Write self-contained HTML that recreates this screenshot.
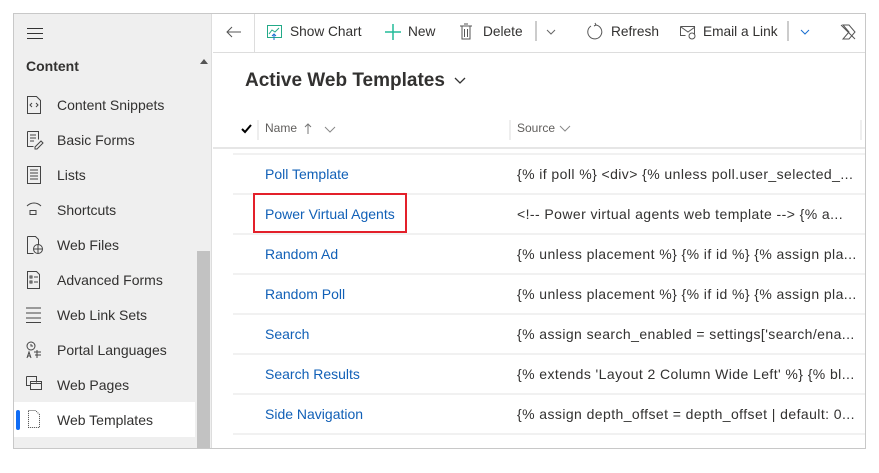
<!DOCTYPE html><html><head><style>
*{margin:0;padding:0;box-sizing:border-box}
body{width:879px;height:462px;background:#fff;font-family:"Liberation Sans",sans-serif;position:relative;overflow:hidden}
.frame{position:absolute;left:13px;top:13px;width:853px;height:436px;border:1px solid #c8c8c8;}
.side{position:absolute;left:14px;top:14px;width:198px;height:434px;background:#efefef;border-right:1px solid #ddd}
.track{position:absolute;left:183px;top:237px;width:13px;height:197px;background:#c2c2c2}
.it{position:absolute;left:57px;font-size:14px;color:#323130;line-height:16px}
.main{position:absolute;left:213px;top:14px;width:652px;height:434px}
.tb{position:absolute;left:0;top:0;width:652px;height:39px;border-bottom:1px solid #ddd}
.tt{position:absolute;top:10px;font-size:13.7px;color:#323130}
.row{position:absolute;left:20px;width:632px;height:40px;border-top:2px solid #f1f1f1}
.n{position:absolute;left:32px;top:11px;font-size:14px;color:#1160b7}
.s{position:absolute;left:284px;top:11px;font-size:14px;color:#323130;white-space:nowrap;letter-spacing:0.42px}
</style></head><body>
<div class="frame"></div>
<div class="side">
<div style="position:absolute;left:13px;top:14px;width:16px;height:11px;border-top:1px solid #333;border-bottom:1px solid #333"><div style="margin-top:4px;border-top:1px solid #333"></div></div>
<div style="position:absolute;left:12px;top:44px;font-size:14px;font-weight:bold;color:#323130">Content</div>
<div style="position:absolute;left:186px;top:45px;width:0;height:0;border-left:4px solid transparent;border-right:4px solid transparent;border-bottom:5px solid #555"></div>
<div class="track"></div>
<div style="position:absolute;left:0;top:388px;width:181px;height:35px;background:#fff"></div>
<div style="position:absolute;left:2px;top:396px;width:4px;height:20px;background:#0f6cf5;border-radius:2px"></div>
</div>
<svg style="position:absolute;left:0;top:0" width="60" height="440" fill="none" stroke="#444" stroke-width="1">
<path d="M27.5 96.5h9l4 4v13h-13z M32 103l-2 2 2 2 M36 103l2 2-2 2"/>
<path d="M27.5 131.5h11v8 M27.5 131.5v15h6 M30 135h6 M30 138h6 M30 141h4 M35 147l6-6 2 2-6 6h-2z"/>
<path d="M27.5 166.5h13v17h-13z M30 170h8 M30 173h8 M30 176h8 M30 179h8"/>
<path d="M27 206c4-4 10-4 14 0 M30 210.5h6v4h-6z"/>
<path d="M27.5 236.5h8l3 3v5 M27.5 236.5v17h6"/><circle cx="38" cy="249" r="4.5"/><path d="M33.5 249h9 M38 244.5v9"/>
<path d="M27.5 271.5h9l3 3v14h-12z M30 276h2v2h-2z M30 281h2v2h-2z M34 277h4 M34 282h4"/>
<path d="M26 308h15 M26 313h15 M26 318h15 M26 322.5h15"/>
<circle cx="31" cy="346" r="4"/><path d="M31 344v2h2 M27 358l2-6 2 6 M28 356h2 M34 352h7 M37 350v8 M35 355h6"/>
<path d="M26.5 376.5h10v6 M26.5 376.5v9h4 M30.5 381.5h11v8h-11z M30.5 383.5h11"/>
<path stroke-dasharray="1 1" d="M28.5 410.5h7l4 4v13h-11z"/>
</svg>
<div class="it" style="top:97px">Content Snippets</div>
<div class="it" style="top:132px">Basic Forms</div>
<div class="it" style="top:167px">Lists</div>
<div class="it" style="top:202px">Shortcuts</div>
<div class="it" style="top:237px">Web Files</div>
<div class="it" style="top:272px">Advanced Forms</div>
<div class="it" style="top:307px">Web Link Sets</div>
<div class="it" style="top:342px">Portal Languages</div>
<div class="it" style="top:377px">Web Pages</div>
<div class="it" style="top:412px">Web Templates</div>
<div class="main">
<div class="tb">
<div style="position:absolute;left:41px;top:0;width:1px;height:39px;background:#ddd"></div>
<svg style="position:absolute;left:0;top:0" width="652" height="39" fill="none" stroke="#555" stroke-width="1">
<path d="M14 18h14 M19 13l-5 5 5 5"/>
<path d="M54.5 11.5h14v12h-14z M56 20l3-4 3 2 4-4" stroke="#2a8"/><path d="M61 26v-6 M59 22l2-2 2 2" stroke="#1a6fd0"/>
<path d="M180 10v16 M172 18h16" stroke="#2b9" stroke-width="1.5"/>
<path d="M247 12h12 M249 12v13h8v-13 M251 10h4 M251.5 15v8 M254.5 15v8"/>
<path d="M323 7v20" stroke="#999"/><path d="M334 16l4 4 4-4" stroke="#666"/>
<path d="M378 12a7 7 0 1 0 5-1 M382 9l1 2-2 1"/>
<path d="M467.5 12.5h14v8 M467.5 12.5v9h5 M468 13l7 5 7-5"/><circle cx="479" cy="22" r="3"/>
<path d="M575 7v20" stroke="#999"/><path d="M588 16l4 4 4-4" stroke="#1a6fd0"/>
<path d="M630 11h6l6 7-6 7h-6l6-7z M628 11l14 14"/>
</svg>
<div class="tt" style="left:77px">Show Chart</div>
<div class="tt" style="left:195px">New</div>
<div class="tt" style="left:270px">Delete</div>
<div class="tt" style="left:398px">Refresh</div>
<div class="tt" style="left:490px">Email a Link</div>
</div>
<div style="position:absolute;left:32px;top:56px;font-size:19px;font-weight:bold;color:#323130">Active Web Templates</div>
<svg style="position:absolute;left:240px;top:62px" width="14" height="10" fill="none" stroke="#333" stroke-width="1.3"><path d="M2 2l5 5 5-5"/></svg>
<svg style="position:absolute;left:0;top:100px" width="652" height="30" fill="none">
<path d="M29 15l3 3 6-7" stroke="#000" stroke-width="2"/>
<path d="M45 6v20 M297 6v20 M648 6v20" stroke="#ddd"/>
<path d="M95 10v10 M92 13l3-3 3 3" stroke="#777"/>
<path d="M112 13l5 5 5-5 M347 12l5 5 5-5" stroke="#888"/>
</svg>
<div style="position:absolute;left:52px;top:107px;font-size:12px;color:#605e5c">Name</div>
<div style="position:absolute;left:304px;top:107px;font-size:12px;color:#605e5c">Source</div>
<div style="position:absolute;left:0;top:133px;width:652px;height:2px;background:#e6e6e6"></div>
<div class="row" style="top:139px"><div class="n">Poll Template</div><div class="s">{% if poll %} &lt;div&gt; {% unless poll.user_selected_...</div></div>
<div class="row" style="top:179px"><div class="n">Power Virtual Agents</div><div class="s">&lt;!-- Power virtual agents web template --&gt; {% a...</div></div>
<div class="row" style="top:219px"><div class="n">Random Ad</div><div class="s">{% unless placement %} {% if id %} {% assign pla...</div></div>
<div class="row" style="top:259px"><div class="n">Random Poll</div><div class="s">{% unless placement %} {% if id %} {% assign pla...</div></div>
<div class="row" style="top:299px"><div class="n">Search</div><div class="s">{% assign search_enabled = settings['search/ena...</div></div>
<div class="row" style="top:339px"><div class="n">Search Results</div><div class="s">{% extends 'Layout 2 Column Wide Left' %} {% bl...</div></div>
<div class="row" style="top:379px"><div class="n">Side Navigation</div><div class="s">{% assign depth_offset = depth_offset | default: 0...</div></div>
<div class="row" style="top:419px"></div>
</div>
<div style="position:absolute;left:253px;top:193px;width:154px;height:40px;border:2px solid #e3202a"></div>
</body></html>
